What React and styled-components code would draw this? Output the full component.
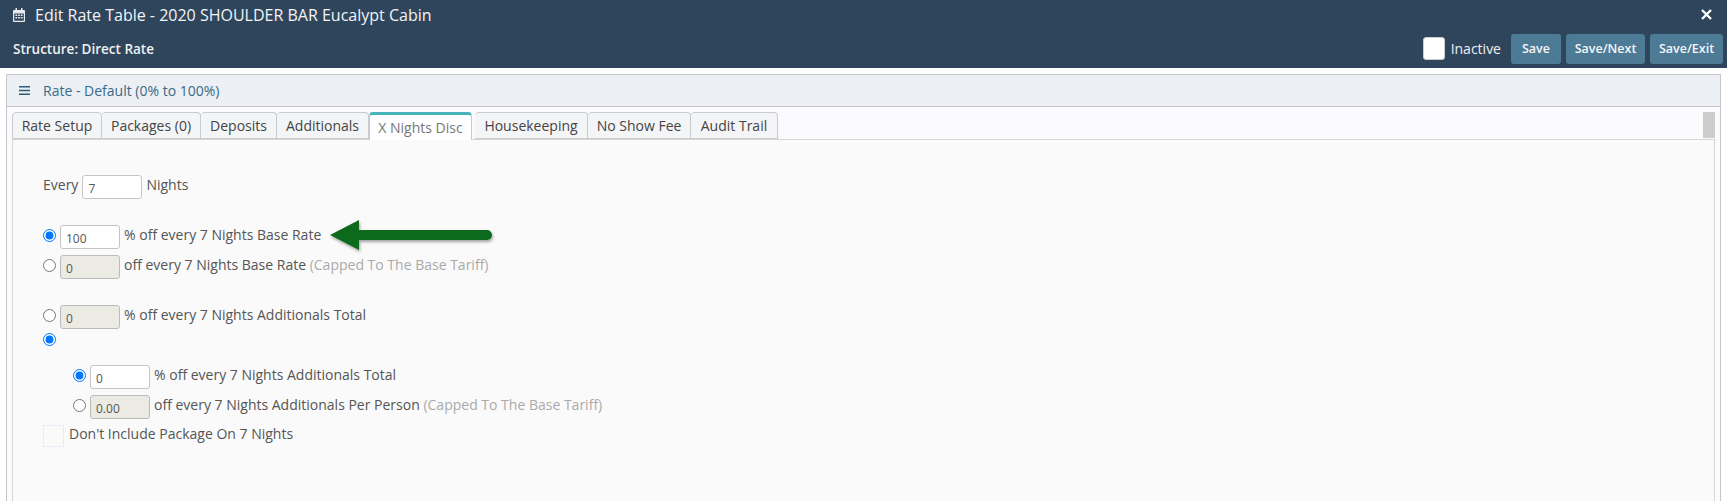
import React from 'react';
import styled, { createGlobalStyle } from 'styled-components';

const TABS = [
  { label: 'Rate Setup', width: 90 },
  { label: 'Packages (0)', width: 99 },
  { label: 'Deposits', width: 76 },
  { label: 'Additionals', width: 92 },
  { label: 'X Nights Disc', width: 103, active: true },
  { label: 'Housekeeping', width: 113 },
  { label: 'No Show Fee', width: 103 },
  { label: 'Audit Trail', width: 87 }
];

const Global = createGlobalStyle`
  html, body {
    margin: 0;
    height: 100%;
    background: #fff;
    overflow: hidden;
  }
  * {
    box-sizing: border-box;
  }
  body {
    font-family: 'Open Sans', 'Liberation Sans', sans-serif;
    font-size: 14px;
    color: #555;
  }
`;

const Page = styled.div`
  width: 1727px;
  height: 501px;
  overflow: hidden;
  display: flex;
  flex-direction: column;
`;

const Header = styled.header`
  height: 68px;
  flex: none;
  background: #2f455c;
  color: #fff;
  padding: 0 4px 0 13px;
  display: flex;
  flex-direction: column;
`;

const TitleRow = styled.div`
  height: 29px;
  display: flex;
  align-items: center;
  justify-content: space-between;
  padding-right: 11px;
`;

const Title = styled.div`
  display: flex;
  align-items: center;
  gap: 10px;
  font-size: 16px;
  color: #f2f4f6;
`;

const ActionRow = styled.div`
  flex: 1;
  display: flex;
  align-items: center;
  justify-content: space-between;
`;

const Structure = styled.div`
  font-size: 13.5px;
  font-weight: 600;
  color: #eef1f3;
`;

const Actions = styled.div`
  display: flex;
  align-items: center;
  gap: 5px;
`;

const InactiveBox = styled.span`
  width: 22px;
  height: 23px;
  background: #fff;
  border: 1px solid #ccc;
  border-radius: 3px;
  margin-right: 1px;
`;

const InactiveLabel = styled.span`
  font-size: 14px;
  color: #eef1f3;
  margin-right: 5px;
`;

const ActionButton = styled.button`
  height: 30px;
  width: ${p => p.$width}px;
  padding: 0;
  border: 0;
  border-radius: 3px;
  background: #4d7b96;
  color: #f4f6f8;
  font: 600 12.5px 'Open Sans', sans-serif;
`;

const Panel = styled.section`
  margin: 6px 6px 0;
  flex: 1;
  border: 1px solid #c4c6c9;
  border-bottom: 0;
  background: #fbfbfd;
  display: flex;
  flex-direction: column;
  min-height: 0;
`;

const PanelHeader = styled.div`
  height: 32px;
  flex: none;
  background: #eceff4;
  border-bottom: 1px solid #c4c6c9;
  display: flex;
  align-items: center;
  gap: 13px;
  padding-left: 12px;
  color: #3a6b87;
  font-size: 14px;
`;

const PanelBody = styled.div`
  flex: 1;
  padding: 5px 5px 0;
  display: flex;
  flex-direction: column;
  position: relative;
  min-height: 0;
`;

const ScrollThumb = styled.div`
  position: absolute;
  top: 5px;
  right: 5px;
  width: 12px;
  height: 26px;
  background: #cdcdcd;
`;

const TabBar = styled.div`
  height: 27px;
  flex: none;
  display: flex;
`;

const Tab = styled.div`
  width: ${p => p.$width}px;
  margin-right: ${p => (p.$active ? 3 : 0)}px;
  display: flex;
  align-items: center;
  justify-content: center;
  font-size: 14px;
  border: 1px solid #c9cbce;
  border-left-width: ${p => (p.$first || p.$active ? 1 : 0)}px;
  border-radius: 4px 4px 0 0;
  background: ${p => (p.$active ? '#fff' : '#f4f5f7')};
  color: ${p => (p.$active ? '#777' : '#444')};
  ${p =>
    p.$active &&
    `
    border-top: 3px solid #45b5bb;
    border-bottom: 0;
    height: 28px;
    position: relative;
    z-index: 1;
  `}
`;

const Content = styled.div`
  flex: 1;
  background: #fafafa;
  border: 1px solid #d4d6d8;
  border-bottom: 0;
  padding: 35px 0 0 30px;
  display: flex;
  flex-direction: column;
  position: relative;
`;

const Row = styled.div`
  display: flex;
  align-items: center;
  height: 24px;
  margin-top: ${p => p.$top || 0}px;
  margin-left: ${p => p.$indent || 0}px;
  gap: 4px;
  white-space: nowrap;
`;

const RowText = styled.span`
  margin-bottom: 5px;
`;

const Radio = styled.input.attrs({ type: 'radio' })`
  width: 13px;
  height: 13px;
  margin: 0 0 3px 0;
  flex: none;
`;

const NumberBox = styled.input`
  width: ${p => p.$width || 60}px;
  height: 24px;
  flex: none;
  border: 1px solid ${p => (p.disabled ? '#bbb' : '#c4c4c4')};
  border-radius: 3px;
  background: ${p => (p.disabled ? '#ebebe4' : '#fff')};
  color: #555;
  font: 12px 'Open Sans', sans-serif;
  padding: 3px 0 0 5px;
`;

const Note = styled.span`
  color: #aaa;
`;

const Tick = styled.span`
  width: 21px;
  height: 22px;
  border: 1px solid #e8ecf6;
  margin-right: 1px;
`;

const Arrow = styled.svg`
  position: absolute;
  left: 316px;
  top: 78px;
`;

function Choice({ checked, value, disabled, indent, top, children }) {
  return (
    <Row $indent={indent} $top={top}>
      <Radio defaultChecked={checked} />
      <NumberBox defaultValue={value} disabled={disabled} />
      <RowText>{children}</RowText>
    </Row>
  );
}

export default function App() {
  return (
    <Page>
      <Global />
      <Header>
        <TitleRow>
          <Title>
            <svg width="12" height="14" viewBox="0 0 12 14" fill="#e8ebee">
              <path d="M2.5 0h1.5v2h4V0h1.5v2H11a1 1 0 0 1 1 1v10a1 1 0 0 1-1 1H1a1 1 0 0 1-1-1V3a1 1 0 0 1 1-1h1.5zM1.2 5.4v7.4h9.6V5.4z" />
              <path d="M2.4 6.6h1.8v1.4H2.4zM5.1 6.6h1.8v1.4H5.1zM7.8 6.6h1.8v1.4H7.8zM2.4 9h1.8v1.4H2.4zM5.1 9h1.8v1.4H5.1zM7.8 9h1.8v1.4H7.8z" />
            </svg>
            Edit Rate Table - 2020 SHOULDER BAR Eucalypt Cabin
          </Title>
          <svg width="11" height="11" viewBox="0 0 11 11" stroke="#fff" strokeWidth="2.4">
            <path d="M1 1l9 9M10 1l-9 9" />
          </svg>
        </TitleRow>
        <ActionRow>
          <Structure>Structure: Direct Rate</Structure>
          <Actions>
            <InactiveBox />
            <InactiveLabel>Inactive</InactiveLabel>
            <ActionButton $width={50}>Save</ActionButton>
            <ActionButton $width={79}>Save/Next</ActionButton>
            <ActionButton $width={73}>Save/Exit</ActionButton>
          </Actions>
        </ActionRow>
      </Header>

      <Panel>
        <PanelHeader>
          <svg width="11" height="9" viewBox="0 0 11 9" fill="#2f5c76">
            <path d="M0 0h11v1.5H0zM0 3.7h11v1.5H0zM0 7.4h11v1.5H0z" />
          </svg>
          Rate - Default (0% to 100%)
        </PanelHeader>
        <PanelBody>
          <ScrollThumb />
          <TabBar>
            {TABS.map((tab, i) => (
              <Tab key={tab.label} $width={tab.width} $active={tab.active} $first={i === 0}>
                {tab.label}
              </Tab>
            ))}
          </TabBar>
          <Content>
            <Row>
              <RowText>Every</RowText>
              <NumberBox defaultValue="7" />
              <RowText>Nights</RowText>
            </Row>

            <Choice checked value="100" top={26}>% off every 7 Nights Base Rate</Choice>
            <Choice value="0" disabled top={6}>
              off every 7 Nights Base Rate <Note>(Capped To The Base Tariff)</Note>
            </Choice>

            <Choice value="0" disabled top={26}>% off every 7 Nights Additionals Total</Choice>
            <Row>
              <Radio defaultChecked />
            </Row>
            <Choice checked value="0" indent={30} top={12}>% off every 7 Nights Additionals Total</Choice>
            <Choice value="0.00" disabled indent={30} top={6}>
              off every 7 Nights Additionals Per Person <Note>(Capped To The Base Tariff)</Note>
            </Choice>
            <Row $top={5}>
              <Tick />
              <RowText>Don't Include Package On 7 Nights</RowText>
            </Row>

            <Arrow width="190" height="44" viewBox="0 0 190 44">
              <defs>
                <filter id="arrowShadow" x="-5%" y="-20%" width="110%" height="150%">
                  <feDropShadow dx="1" dy="2" stdDeviation="1.5" floodColor="#000" floodOpacity="0.35" />
                </filter>
              </defs>
              <path
                d="M1 17L30 2v10h128a5 5 0 0 1 0 10H30v10z"
                fill="#0f6a1a"
                filter="url(#arrowShadow)"
              />
            </Arrow>
          </Content>
        </PanelBody>
      </Panel>
    </Page>
  );
}
